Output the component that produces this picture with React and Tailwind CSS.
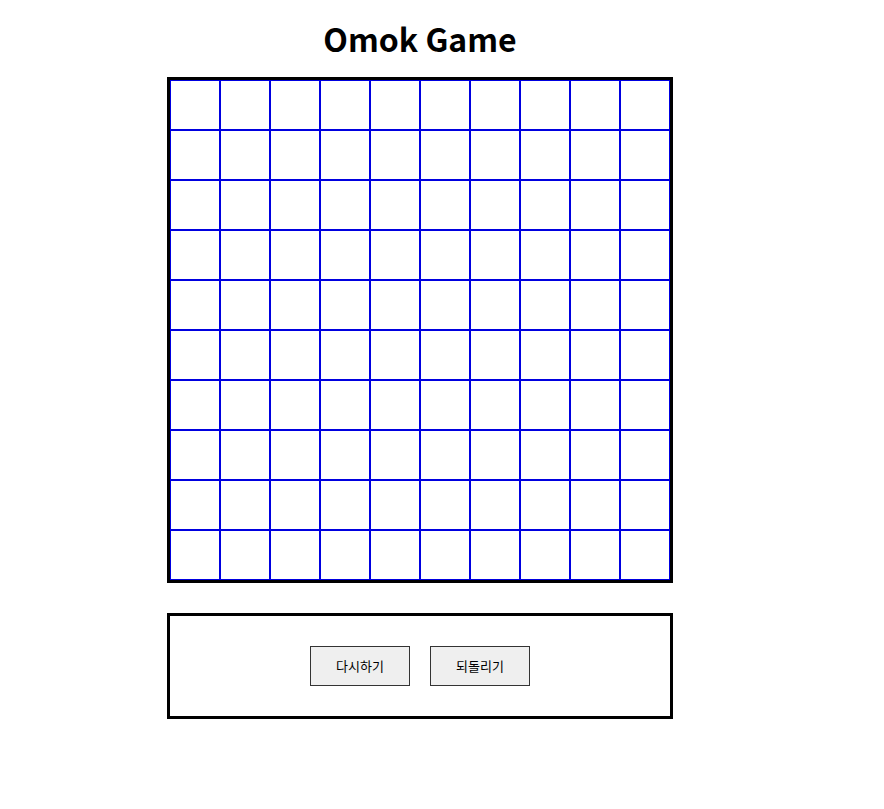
export default function App() {
  const cells = Array.from({ length: 100 })

  return (
    <div className="w-[840px] flex flex-col items-center bg-white" style={{ fontFamily: '"Noto Sans CJK KR", "Noto Sans", sans-serif' }}>
      <h1 className="mt-[19px] mb-[20px] h-[38px] text-[32px] leading-[38px] font-bold text-black">
        Omok Game
      </h1>

      <div className="border-[3px] border-black">
        <div className="grid grid-cols-[repeat(10,50px)] grid-rows-[repeat(10,50px)]">
          {cells.map((_, i) => (
            <div key={i} className="border border-[#0000e0]" />
          ))}
        </div>
      </div>

      <div className="mt-[30px] w-[506px] border-[3px] border-black py-[30px] flex justify-center gap-5">
        <button className="w-[100px] h-[40px] bg-[#efefef] border border-[#333] text-[13px] text-black">
          다시하기
        </button>
        <button className="w-[100px] h-[40px] bg-[#efefef] border border-[#333] text-[13px] text-black">
          되돌리기
        </button>
      </div>
    </div>
  )
}
